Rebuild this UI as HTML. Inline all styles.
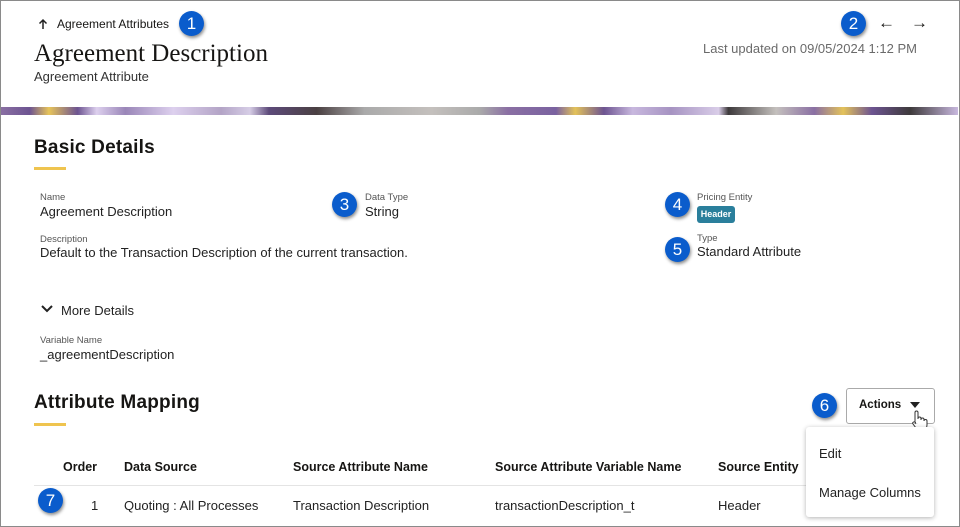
<!DOCTYPE html>
<html><head><style>
body{margin:0;width:960px;height:527px;overflow:hidden;background:#fff;font-family:"Liberation Sans",sans-serif;color:#161513;}
.frame{position:absolute;left:0;top:0;width:958px;height:525px;border:1px solid #8a8a8a;}
.a{position:absolute;white-space:nowrap;}
.b{position:absolute;width:25px;height:25px;border-radius:50%;background:#0a5ccc;color:#fff;font-size:17px;text-align:center;line-height:25px;box-shadow:1px 2px 3px rgba(0,0,0,.45);}
.lbl{font-size:9.5px;color:#555;}
.val{font-size:13px;color:#222;}
.h2{font-size:19px;font-weight:bold;letter-spacing:0.2px;}
.ul{position:absolute;width:32px;height:3px;background:#efc44f;}
.th{font-size:12.5px;font-weight:bold;}
.td{font-size:13px;color:#222;}
.strip{position:absolute;left:1px;top:107px;width:957px;height:8px;background:linear-gradient(90deg,#8a6fa3 0,#6d5491 3%,#e7c45a 5%,#6d5491 8%,#ddd0ee 10%,#9a86b8 13%,#ddd0ee 18%,#b3a4c6 23%,#d6cde6 26%,#5d4a7a 28%,#4a4042 33%,#aaa 38%,#c4c0bd 45%,#aaa 50%,#8a6fa3 53%,#7a62a0 58%,#e3c25a 60%,#6d5491 63%,#c8b8de 66%,#a693c2 70%,#d9cde8 75%,#3e3a3c 76%,#c4c0bd 81%,#8a6fa3 85%,#e3c25a 88%,#6d5491 91%,#3e3a3c 95%,#c8b8de 100%);}
</style></head><body>
<div class="frame"></div>
<svg class="a" style="left:38px;top:18px" width="10" height="12"><path d="M5 11V2M1.5 5.5L5 2L8.5 5.5" stroke="#222" stroke-width="1.5" fill="none"/></svg>
<div class="a" style="left:57px;top:17px;font-size:12px;">Agreement Attributes</div>
<div class="b" style="left:179px;top:11px;">1</div>
<div class="a" style="left:34px;top:40px;font-family:'Liberation Serif',serif;font-size:25px;">Agreement Description</div>
<div class="a" style="left:34px;top:69px;font-size:13px;color:#333;">Agreement Attribute</div>
<div class="b" style="left:841px;top:11px;">2</div>
<div class="a" style="left:878px;top:13px;font-size:17px;">&#8592;</div>
<div class="a" style="left:911px;top:13px;font-size:17px;">&#8594;</div>
<div class="a" style="left:703px;top:41px;font-size:13px;color:#6a6a6a;">Last updated on 09/05/2024 1:12 PM</div>
<div class="strip"></div>
<div class="a h2" style="left:34px;top:137px;">Basic Details</div>
<div class="ul" style="left:34px;top:167px;"></div>
<div class="a lbl" style="left:40px;top:192px;">Name</div>
<div class="a val" style="left:40px;top:204px;">Agreement Description</div>
<div class="a lbl" style="left:40px;top:234px;">Description</div>
<div class="a val" style="left:40px;top:245px;">Default to the Transaction Description of the current transaction.</div>
<div class="b" style="left:332px;top:192px;">3</div>
<div class="a lbl" style="left:365px;top:192px;">Data Type</div>
<div class="a val" style="left:365px;top:204px;">String</div>
<div class="b" style="left:665px;top:192px;">4</div>
<div class="a lbl" style="left:697px;top:192px;">Pricing Entity</div>
<div class="a" style="left:697px;top:206px;width:38px;height:17px;background:#2a7f9c;border-radius:3px;color:#fff;font-size:9px;font-weight:bold;text-align:center;line-height:17px;">Header</div>
<div class="b" style="left:665px;top:237px;">5</div>
<div class="a lbl" style="left:697px;top:233px;">Type</div>
<div class="a val" style="left:697px;top:244px;">Standard Attribute</div>
<svg class="a" style="left:41px;top:305px" width="12" height="8"><path d="M1 1L6 6L11 1" stroke="#222" stroke-width="2" fill="none"/></svg>
<div class="a val" style="left:61px;top:303px;">More Details</div>
<div class="a lbl" style="left:40px;top:335px;">Variable Name</div>
<div class="a val" style="left:40px;top:347px;">_agreementDescription</div>
<div class="a h2" style="left:34px;top:392px;">Attribute Mapping</div>
<div class="ul" style="left:34px;top:423px;"></div>
<div class="b" style="left:812px;top:393px;">6</div>
<div class="a" style="left:846px;top:388px;width:87px;height:34px;border:1px solid #aaa;border-radius:3px;"></div>
<div class="a" style="left:859px;top:399px;font-size:11.5px;font-weight:bold;">Actions</div>
<svg class="a" style="left:910px;top:402px" width="10" height="6"><path d="M0 0H10L5 6Z" fill="#222"/></svg>
<svg class="a" style="left:909px;top:409px" width="20" height="24"><path d="M6 13V3.5a1.5 1.5 0 0 1 3 0V10M9 9.5a1.5 1.5 0 0 1 3 0V11M12 10.5a1.5 1.5 0 0 1 3 0V12M15 12a1.5 1.5 0 0 1 3 0v4c0 3-2 6-5 6h-2c-2 0-3-1-4-3l-3-4c-1-1.5 1-3 2.5-1.5L6 15" stroke="#333" stroke-width="1" fill="#fff"/></svg>
<div class="a th" style="left:63px;top:460px;">Order</div>
<div class="a th" style="left:124px;top:460px;">Data Source</div>
<div class="a th" style="left:293px;top:460px;">Source Attribute Name</div>
<div class="a th" style="left:495px;top:460px;">Source Attribute Variable Name</div>
<div class="a th" style="left:718px;top:460px;">Source Entity</div>
<div class="a" style="left:34px;top:485px;width:800px;height:1px;background:#e4e4e4;"></div>
<div class="b" style="left:38px;top:488px;">7</div>
<div class="a td" style="left:91px;top:498px;">1</div>
<div class="a td" style="left:124px;top:498px;">Quoting : All Processes</div>
<div class="a td" style="left:293px;top:498px;">Transaction Description</div>
<div class="a td" style="left:495px;top:498px;">transactionDescription_t</div>
<div class="a td" style="left:718px;top:498px;">Header</div>
<div class="a" style="left:806px;top:427px;width:128px;height:90px;background:#fff;border-radius:3px;box-shadow:0 1px 5px rgba(0,0,0,.3);"></div>
<div class="a td" style="left:819px;top:446px;">Edit</div>
<div class="a td" style="left:819px;top:485px;">Manage Columns</div>
</body></html>
